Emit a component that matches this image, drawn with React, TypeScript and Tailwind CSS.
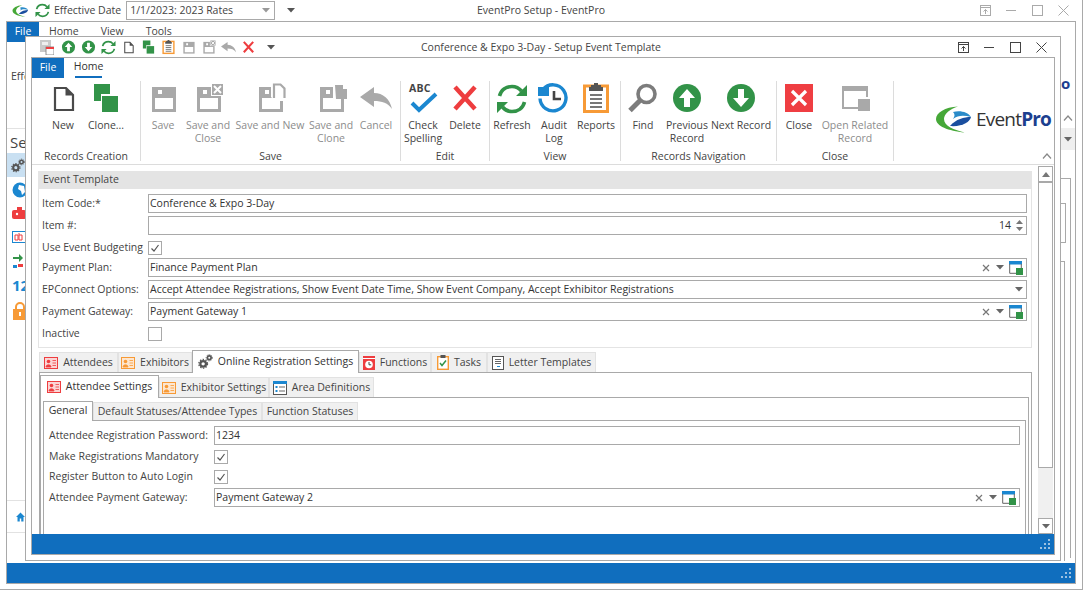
import React from "react";

function Doc({ s = 32, c = "#4a4a4a" }: { s?: number; c?: string }) {
  return (
    <svg width={s} height={s} viewBox="0 0 32 32" fill="none">
      <path d="M8 5h11l7 7v15H8z" stroke={c} strokeWidth="2.200" />
      <path d="M18.500 5v7.500h7.500z" fill={c} />
    </svg>
  );
}
function Clone({ s = 32 }: { s?: number }) {
  return (
    <svg width={s} height={s} viewBox="0 0 32 32">
      <path d="M4 1h16v10h-9v7H4z" fill="#329348" />
      <rect x="12" y="13" width="16" height="16" fill="#329348" />
    </svg>
  );
}
function Floppy({ s = 32, extra }: { s?: number; extra?: React.ReactNode }) {
  return (
    <svg width={s} height={s} viewBox="0 0 32 32">
      <path d="M5 4h24v25H5z" fill="#a9a9a9" />
      <path d="M11 7h4v4h-4zM8 15h18v11H8z" fill="#fff" />
      {extra}
    </svg>
  );
}
const SaveClose = ({ s = 32 }: { s?: number }) => (
  <Floppy s={s} extra={<g><rect x="19" y="0" width="13" height="13" fill="#fff" /><rect x="20" y="1" width="11" height="11" fill="#a9a9a9" /><path d="M22 3l7 7M29 3l-7 7" stroke="#fff" strokeWidth="2" /></g>} />
);
const SaveNew = ({ s = 32 }: { s?: number }) => (
  <Floppy s={s} extra={<g><path d="M17 14V0h10l5 4v14H21z" fill="#fff" /><path d="M20 15V1.500h6.500l4 4V15" fill="none" stroke="#a9a9a9" strokeWidth="2.200" /></g>} />
);
const SaveClone = ({ s = 32 }: { s?: number }) => (
  <Floppy s={s} extra={<g><rect x="18" y="2" width="14" height="14" fill="#fff" /><path d="M20 2h8v4h4v10h-11z" fill="#a9a9a9" /></g>} />
);
function Undo({ s = 32 }: { s?: number }) {
  return (
    <svg width={s} height={s} viewBox="0 0 32 32">
      <path d="M0 14L14 4v6c9 0 16 6 18 16-4-6-10-8-18-8v6z" fill="#a9a9a9" />
    </svg>
  );
}
function RedX({ s = 32 }: { s?: number }) {
  return (
    <svg width={s} height={s} viewBox="0 0 32 32">
      <path d="M6 4l20 22M26 4L6 26" stroke="#ee3d3f" strokeWidth="4.500" fill="none" />
    </svg>
  );
}
function Refresh({ s = 32 }: { s?: number }) {
  return (
    <svg width={s} height={s} viewBox="0 0 32 32" fill="none">
      <path d="M3.500 13C5 7 10 3.500 16 3.500c4 0 7 1.500 9.500 4.500" stroke="#329348" strokeWidth="3.600" />
      <path d="M28.500 19C27 25 22 28.500 16 28.500c-4 0-7-1.500-9.500-4.500" stroke="#329348" strokeWidth="3.600" />
      <path d="M31 2v11H20zM1 30V19h11z" fill="#329348" />
    </svg>
  );
}
function Audit({ s = 32 }: { s?: number }) {
  return (
    <svg width={s} height={s} viewBox="0 0 32 32" fill="none">
      <path d="M5 6.500a13 13 0 1 1-3 9" stroke="#1b87d0" strokeWidth="3.400" />
      <path d="M0 4h11v9H0z" fill="#1b87d0" />
      <path d="M16 8v8h7" stroke="#444" strokeWidth="2.600" />
    </svg>
  );
}
function Clip({ s = 32 }: { s?: number }) {
  return (
    <svg width={s} height={s} viewBox="0 0 32 32">
      <rect x="4.500" y="3" width="23" height="25.500" fill="#fff" stroke="#f79a36" strokeWidth="3" />
      <path d="M11 4V2h3V0h4v2h3v2h2v4H9V4z" fill="#555" />
      <path d="M10 12h12M10 16h12M10 20h12M10 24h12" stroke="#777" strokeWidth="2" />
    </svg>
  );
}
function Find({ s = 32 }: { s?: number }) {
  return (
    <svg width={s} height={s} viewBox="0 0 32 32" fill="none">
      <circle cx="19.500" cy="11" r="8.500" stroke="#7c7c7c" strokeWidth="3.600" />
      <path d="M13 17.500L3 27.500" stroke="#7c7c7c" strokeWidth="5" />
    </svg>
  );
}
function Circ({ s = 32, up }: { s?: number; up?: boolean }) {
  return (
    <svg width={s} height={s} viewBox="0 0 32 32">
      <circle cx="16" cy="15" r="14" fill="#329348" />
      <path
        d={up ? "M16 6l8 9h-5v9h-6v-9H8z" : "M16 24l8-9h-5V6h-6v9H8z"}
        fill="#fff"
      />
    </svg>
  );
}
function CloseBtn() {
  return (
    <svg width="32" height="32" viewBox="0 0 32 32">
      <rect x="2" y="1" width="28" height="28" fill="#ef3e42" />
      <path d="M9 8l14 14M23 8L9 22" stroke="#fff" strokeWidth="3.200" />
    </svg>
  );
}
function Related() {
  return (
    <svg width="32" height="32" viewBox="0 0 32 32" fill="none">
      <path d="M3 3h26v5H3z" fill="#a9a9a9" />
      <path d="M4 6v19h15M28 6v8" stroke="#a9a9a9" strokeWidth="2" />
      <rect x="19" y="16" width="12" height="12" fill="#a9a9a9" />
    </svg>
  );
}
function Abc() {
  return (
    <div className="relative w-[32px] h-[32px]">
      <span className="absolute left-[2px] top-[-2px] text-[10.500px] font-bold text-[#444] tracking-[0.2px]">ABC</span>
      <svg className="absolute left-0 top-0" width="32" height="32" viewBox="0 0 32 32" fill="none">
        <path d="M5 20l7 7L29 11" stroke="#1b87d0" strokeWidth="4" />
      </svg>
    </div>
  );
}
function Card({ c, t }: { c: string; t: string }) {
  return (
    <svg width="14" height="12" viewBox="0 0 14 12">
      <rect x="0.500" y="0.500" width="13" height="11" fill={t} stroke={c} />
      <circle cx="4.500" cy="4.500" r="1.800" fill={c} />
      <path d="M2 10c0-3 5-3 5 0zM8.500 3.500H12M8.500 6H12M8.500 8.500H12" fill={c} stroke={c} strokeWidth="0.800" />
    </svg>
  );
}
function Gears({ s = 16, c = "#555" }: { s?: number; c?: string }) {
  return (
    <svg width={s} height={s} viewBox="0 0 16 16" fill="none">
      <circle cx="5.500" cy="10.500" r="3" stroke={c} strokeWidth="2.400" />
      <circle cx="5.500" cy="10.500" r="4.700" stroke={c} strokeWidth="1.300" strokeDasharray="1.500 1.500" />
      <circle cx="12" cy="4" r="2" stroke={c} strokeWidth="1.800" />
      <circle cx="12" cy="4" r="3.300" stroke={c} strokeWidth="1" strokeDasharray="1.200 1.200" />
    </svg>
  );
}
function Clock() {
  return (
    <svg width="12" height="14" viewBox="0 0 12 14">
      <rect width="12" height="14" fill="#ee3d3f" />
      <rect x="0" y="2" width="12" height="1" fill="#fff" />
      <circle cx="6" cy="8.500" r="3.800" fill="#fff" />
      <path d="M6 6v2.800h2.200" stroke="#444" fill="none" />
    </svg>
  );
}
function TaskIco() {
  return (
    <svg width="12" height="15" viewBox="0 0 12 15">
      <rect x="0.700" y="1.700" width="10.600" height="12.600" fill="#fff" stroke="#f79a36" strokeWidth="1.400" />
      <rect x="3.500" y="0" width="5" height="3" fill="#555" />
      <path d="M3 8l2 2.500 4-5" stroke="#329348" strokeWidth="1.500" fill="none" />
    </svg>
  );
}
function Letter() {
  return (
    <svg width="12" height="14" viewBox="0 0 12 14">
      <rect x="0.500" y="0.500" width="11" height="13" fill="#fff" stroke="#555" />
      <path d="M3 3.500h6M3 5.500h6M3 7.500h6" stroke="#666" />
      <path d="M5 10.500h3" stroke="#1b87d0" />
    </svg>
  );
}
function AreaIco() {
  return (
    <svg width="14" height="14" viewBox="0 0 14 14">
      <rect x="0.500" y="0.500" width="13" height="13" fill="#fff" stroke="#555" />
      <rect width="14" height="3" fill="#1b87d0" />
      <rect x="2.500" y="5" width="2" height="2" fill="#1b87d0" />
      <rect x="2.500" y="9" width="2" height="2" fill="#1b87d0" />
      <path d="M6 6h6M6 10h6" stroke="#666" />
    </svg>
  );
}
function Swoosh({ w = 36, h = 27 }: { w?: number; h?: number }) {
  return (
    <svg width={w} height={h} viewBox="0 0 36 27">
      <path d="M22 0.500C9 1 0 7 0 13c0 7 12 12 29 13.500C18 24 8 20 8 13c0-5 6-10 14-12.500z" fill="#46a838" />
      <path d="M14 20c6-7 14-9 21-9-1 5-9 10-21 9z" fill="#1a4f9f" />
      <path d="M17 6c7-2 15 0 18 5-7-2-13-2-18 2 2-3 2-5 0-7z" fill="#2a8bc9" />
    </svg>
  );
}
function Logo() {
  return (
    <div className="flex items-center gap-[4px]">
      <Swoosh />
      <span className="text-[19px] leading-none tracking-[-0.800px] text-[#333]">
        Event<span className="font-bold text-[#1d3f8f]">Pro</span>
      </span>
    </div>
  );
}
function Caret({ c = "#666" }: { c?: string }) {
  return (
    <svg width="8" height="5" viewBox="0 0 8 5">
      <path d="M0 0h8L4 4.500z" fill={c} />
    </svg>
  );
}
function Chevron({ c = "#888" }: { c?: string }) {
  return (
    <svg width="10" height="6" viewBox="0 0 10 6" fill="none">
      <path d="M1 5.500L5 1l4 4.500" stroke={c} strokeWidth="1.200" />
    </svg>
  );
}
function WinCtl({ c }: { c: string }) {
  return (
    <div className="flex items-center gap-[11px]">
      <svg width="15" height="13" viewBox="0 0 15 13" fill="none">
        <rect x="0.500" y="0.500" width="10" height="10" transform="translate(2 1)" stroke={c} />
        <path d="M2.500 3.500h10M7.500 10V5.500M5.500 7.500l2-2 2 2" stroke={c} />
      </svg>
      <svg width="15" height="13" viewBox="0 0 15 13"><path d="M2 6.500h10" stroke={c} /></svg>
      <svg width="15" height="13" viewBox="0 0 15 13" fill="none"><rect x="2.500" y="1.500" width="10" height="10" stroke={c} /></svg>
      <svg width="15" height="13" viewBox="0 0 15 13" fill="none"><path d="M2.500 1.500l10 10M12.500 1.500l-10 10" stroke={c} /></svg>
    </div>
  );
}
function Grip() {
  return (
    <svg width="11" height="11" viewBox="0 0 11 11" fill="#9cc1e2">
      <rect x="8" y="0" width="2" height="2" /><rect x="4" y="4" width="2" height="2" /><rect x="8" y="4" width="2" height="2" />
      <rect x="0" y="8" width="2" height="2" /><rect x="4" y="8" width="2" height="2" /><rect x="8" y="8" width="2" height="2" />
    </svg>
  );
}

function RBtn({ w, icon, label, off }: { w: number; icon: React.ReactNode; label: React.ReactNode; off?: boolean }) {
  return (
    <div style={{ width: w }} className={`flex flex-col items-center shrink-0 ${off ? "text-[#8c8c8c]" : "text-[#444]"}`}>
      <div className="h-[32px] w-[32px] flex items-center justify-center">{icon}</div>
      <div className="mt-[4px] text-center leading-[13px] whitespace-nowrap">{label}</div>
    </div>
  );
}
function RGroup({ w, title, children }: { w: number; title: string; children: React.ReactNode }) {
  return (
    <div style={{ width: w }} className="shrink-0 h-[80px] flex flex-col border-r border-[#dcdcdc]">
      <div className="flex flex-1 pt-[2px]">{children}</div>
      <div className="text-center text-[#444] leading-[13px] h-[13px] mb-[-2px]">{title}</div>
    </div>
  );
}
function Input({ children, right, cls = "" }: { children?: React.ReactNode; right?: React.ReactNode; cls?: string }) {
  return (
    <div className={`h-[19px] border border-[#a9a9a9] bg-white flex items-center pl-[1px] pr-[3px] text-[#333] flex-1 min-w-0 ${cls}`}>
      <div className="flex-1 whitespace-nowrap">{children}</div>
      {right}
    </div>
  );
}
function Check({ on }: { on?: boolean }) {
  return (
    <div className="w-[14px] h-[14px] border border-[#a9a9a9] flex items-center justify-center bg-white">
      {on && (
        <svg width="10" height="10" viewBox="0 0 10 10" fill="none"><path d="M1.500 5.500l2.500 2.500 4.500-6" stroke="#555" strokeWidth="1.200" /></svg>
      )}
    </div>
  );
}
function ComboEnd() {
  return (
    <div className="flex items-center">
      <svg width="8" height="8" viewBox="0 0 8 8" fill="none"><path d="M1 1l6 6M7 1L1 7" stroke="#777" strokeWidth="1.200" /></svg>
      <div className="ml-[6px] mr-[5px]"><Caret /></div>
      <svg width="14" height="14" viewBox="0 0 14 14" fill="none">
        <rect x="0" y="0" width="13" height="3.500" fill="#1b87d0" />
        <path d="M0.700 3v9.300H8M12.300 3v4" stroke="#666" />
        <rect x="7" y="7" width="7" height="7" fill="#329348" />
      </svg>
    </div>
  );
}
function Tab({ w, active, h, icon, children }: { w: number; active?: boolean; h: number; icon?: React.ReactNode; children: React.ReactNode }) {
  return (
    <div
      style={{ width: w, height: h }}
      className={
        active
          ? "shrink-0 flex items-center justify-center gap-[5px] border border-b-0 border-[#a9a9a9] bg-white mb-[-1px] relative text-[#333] pb-[1px]"
          : "shrink-0 flex items-center justify-center gap-[5px] bg-[#f0f0f0] border border-b-0 border-[#e2e2e2] text-[#444]"
      }
    >
      {icon}
      <span className="whitespace-nowrap">{children}</span>
    </div>
  );
}

function BgLeft() {
  return (
    <div className="w-[18px] shrink-0 flex flex-col overflow-hidden">
      <div className="h-[87px] border-b border-[#e2e2e2] pt-[27px] pl-[4px] text-[#444] whitespace-nowrap">Effe</div>
      <div className="h-[24px] pt-[5px] pl-[3px] text-[15px] text-[#444] leading-[16px]">Se</div>
      <div className="h-[24px] bg-[#c9e0f2] flex items-center pl-[4px]"><Gears s={15} /></div>
      <div className="flex flex-col items-start pl-[5px] pt-[5px] gap-[8px]">
        <svg width="16" height="16" viewBox="0 0 16 16"><circle cx="8" cy="8" r="7.500" fill="#1b87d0" /><path d="M7 3l5 1 1 6-3 3-1-4-3-2z" fill="#fff" /></svg>
        <svg width="16" height="16" viewBox="0 0 16 16"><rect x="0" y="4" width="14" height="9" rx="2" fill="#ee3d3f" /><rect x="5" y="1" width="5" height="4" fill="#ee3d3f" /><circle cx="5" cy="8" r="1.200" fill="#fff" /></svg>
        <svg width="16" height="15" viewBox="0 0 16 15"><rect x="0.500" y="1.500" width="15" height="11" fill="#fff" stroke="#1b87d0" /><path d="M3 5h3v5H3zM7 3v7h3V5H7" stroke="#ee3d3f" fill="none" /></svg>
        <svg width="16" height="16" viewBox="0 0 16 16"><path d="M1 4h6V1l4 4-4 4V6H1z" fill="#329348" /><rect x="6" y="11" width="5" height="3" fill="#ee3d3f" /><rect x="1" y="12" width="4" height="3" fill="#1b87d0" /></svg>
        <span className="font-bold text-[15px] leading-[17px] text-[#1b87d0] whitespace-nowrap">12</span>
        <svg width="16" height="19" viewBox="0 0 16 19"><rect x="1" y="7" width="14" height="11" fill="#f79a36" /><path d="M4 8V5a4 4 0 0 1 8 0v3" stroke="#f79a36" strokeWidth="2" fill="none" /><rect x="7" y="10" width="2" height="4" fill="#fff" /></svg>
      </div>
      <div className="flex-1" />
      <div className="border-t border-b border-[#e2e2e2] h-[33px] flex items-center pl-[9px]">
        <svg width="12" height="12" viewBox="0 0 12 12"><path d="M6 0l6 6h-2v6H7V8H5v4H2V6H0z" fill="#1b87d0" /></svg>
      </div>
      <div className="h-[30px]" />
    </div>
  );
}
function BgRight() {
  return (
    <div className="w-[15px] shrink-0 flex flex-col overflow-hidden">
      <div className="h-[86px] pl-[1px]">
        <div className="pt-[33px] h-[63px] text-[15px] leading-[16px] font-bold text-[#1d3f8f]">o</div>
        <div className="pl-[2px] pt-[10px]"><Chevron /></div>
      </div>
      <div className="h-[22px] bg-[#efefef] flex items-center justify-center"><Caret /></div>
      <div className="h-[28px]" />
      <div className="h-[380px] w-[11px] border-t border-r border-[#a9a9a9] pt-[24px]">
        <div className="h-[40px] w-[6px] border-t border-r border-b border-[#a9a9a9]" />
        <div className="h-[300px] w-[5px] mt-[18px] border-t border-r border-[#a9a9a9]" />
      </div>
    </div>
  );
}

export default function App() {
  return (
    <div className="relative w-[1083px] h-[590px] bg-white overflow-hidden border-r border-b border-[#a9a9a9] text-[10.500px] [font-family:'Open_Sans','Noto_Sans',sans-serif]">
      {/* main window */}
      <div className="flex items-center h-[21px]">
        <div className="w-[300px] flex items-center shrink-0 h-full">
          <div className="ml-[12px] w-[17px]"><Swoosh w={17} h={12} /></div>
          <div className="ml-[6px]"><Refresh s={15} /></div>
          <span className="ml-[4px] text-[#444] whitespace-nowrap pt-[1px]">Effective Date</span>
          <div className="ml-[5px] w-[149px] h-[19px] border border-[#a9a9a9] flex items-center justify-between pl-[3px] pr-[4px] text-[#444]">
            <span className="whitespace-nowrap">1/1/2023: 2023 Rates</span>
            <Caret c="#999" />
          </div>
          <div className="ml-[12px]"><Caret c="#555" /></div>
        </div>
        <div className="flex-1 text-center text-[#444] whitespace-nowrap pt-[1px]">EventPro Setup - EventPro</div>
        <div className="w-[300px] flex justify-end pr-[11px]"><WinCtl c="#aaa" /></div>
      </div>
      <div className="ml-[6px] w-[1070px] h-[563px] border border-[#a9a9a9] flex flex-col">
        <div className="h-[20px] flex shrink-0">
          <div className="w-[32px] h-[20px] bg-[#106ebe] text-white flex items-center justify-center">File</div>
          <div className="flex items-center text-[#444] pl-[10px] gap-[22px]"><span>Home</span><span>View</span><span>Tools</span></div>
        </div>
        <div className="flex-1 flex justify-between min-h-0 overflow-hidden">
          <BgLeft />
          <BgRight />
        </div>
        <div className="h-[20px] bg-[#106ebe] shrink-0 flex items-center justify-end pr-[3px]"><Grip /></div>
      </div>

      {/* inner window */}
      <div className="absolute left-[25px] top-[36px] w-[1036px] h-[525px] bg-white border border-[#a9a9a9] flex flex-col">
        <div className="h-[20px] flex items-center shrink-0">
          <div className="w-[297px] flex items-center pl-[14px] shrink-0">
            <svg width="14" height="15" viewBox="0 0 14 15" className="shrink-0"><rect x="0" y="0" width="11" height="12" fill="#c9c9c9" /><rect x="2" y="2" width="6" height="3" fill="#eee" /><rect x="6" y="7" width="8" height="8" fill="#fff" stroke="#777" strokeWidth="0.800" /><rect x="6" y="7" width="8" height="2" fill="#ee3d3f" /></svg>
            <div className="ml-[7px] flex items-center gap-[5px]">
              <Circ s={15} up /><Circ s={15} /><Refresh s={15} />
              <Doc s={15} /><Clone s={15} /><Clip s={15} />
              <Floppy s={15} /><SaveClose s={15} /><Undo s={15} /><RedX s={15} />
            </div>
            <div className="ml-[11px]"><Caret c="#555" /></div>
          </div>
          <div className="flex-1 text-center text-[#444] whitespace-nowrap pt-[1px]">Conference &amp; Expo 3-Day - Setup Event Template</div>
          <div className="w-[301px] flex justify-end pr-[11px]"><WinCtl c="#444" /></div>
        </div>
        <div className="ml-[5px] w-[1024px] h-[498px] border border-[#a9a9a9] flex flex-col">
          {/* ribbon tabs */}
          <div className="h-[20px] flex shrink-0">
            <div className="w-[32px] h-[20px] bg-[#106ebe] text-white flex items-center justify-center">File</div>
            <div className="ml-[11px] h-[20px] w-[27px] border-b-2 border-[#106ebe] flex items-center justify-center text-[#333]">Home</div>
          </div>
          {/* ribbon */}
          <div className="h-[87px] pt-[3px] flex border-b border-[#dcdcdc] shrink-0 relative">
            <RGroup w={109} title="Records Creation">
              <div className="w-[9px]" />
              <RBtn w={44} icon={<Doc />} label="New" />
              <RBtn w={42} icon={<Clone />} label="Clone..." />
            </RGroup>
            <RGroup w={260} title="Save">
              <RBtn w={44} off icon={<Floppy />} label="Save" />
              <RBtn w={46} off icon={<SaveClose />} label={<>Save and<br />Close</>} />
              <RBtn w={78} off icon={<SaveNew />} label="Save and New" />
              <RBtn w={44} off icon={<SaveClone />} label={<>Save and<br />Clone</>} />
              <RBtn w={46} off icon={<Undo />} label="Cancel" />
            </RGroup>
            <RGroup w={89} title="Edit">
              <RBtn w={44} icon={<Abc />} label={<>Check<br />Spelling</>} />
              <RBtn w={40} icon={<RedX />} label="Delete" />
            </RGroup>
            <RGroup w={131} title="View">
              <RBtn w={44} icon={<Refresh />} label="Refresh" />
              <RBtn w={40} icon={<Audit />} label={<>Audit<br />Log</>} />
              <RBtn w={44} icon={<Clip />} label="Reports" />
            </RGroup>
            <RGroup w={156} title="Records Navigation">
              <RBtn w={44} icon={<Find />} label="Find" />
              <RBtn w={44} icon={<Circ up />} label={<>Previous<br />Record</>} />
              <RBtn w={64} icon={<Circ />} label="Next Record" />
            </RGroup>
            <RGroup w={117} title="Close">
              <RBtn w={44} icon={<CloseBtn />} label="Close" />
              <RBtn w={68} off icon={<Related />} label={<>Open Related<br />Record</>} />
            </RGroup>
            <div className="flex-1 relative">
              <div className="pl-[42px] pt-[25px]"><Logo /></div>
              <div className="absolute right-[2px] bottom-[5px]"><Chevron /></div>
            </div>
          </div>
          {/* form area */}
          <div className="flex-1 flex min-h-0">
            <div className="w-[1006px] shrink-0 pl-[6px] pt-[6px] overflow-hidden">
              <div className="w-[994px]">
                <div className="h-[18px] bg-[#e4e4e4] pl-[5px] flex items-center text-[#444]">Event Template</div>
                <div className="border-l border-r border-b border-[#e4e4e4] pl-[3px] pr-[4px] pt-[5px] pb-[4px] text-[#444]">
                  <div className="flex items-center mb-[3px]"><div className="w-[106px]">Item Code:*</div><Input>Conference &amp; Expo 3-Day</Input></div>
                  <div className="flex items-center mb-[3px]"><div className="w-[106px]">Item #:</div>
                    <Input right={
                      <div className="flex items-center gap-[5px]"><span>14</span>
                        <div className="flex flex-col gap-[3px]">
                          <svg width="7" height="4" viewBox="0 0 7 4"><path d="M0 4h7L3.500 0z" fill="#777" /></svg>
                          <svg width="7" height="4" viewBox="0 0 7 4"><path d="M0 0h7L3.500 4z" fill="#777" /></svg>
                        </div></div>} /></div>
                  <div className="flex items-center h-[20px]"><div className="w-[106px] whitespace-nowrap">Use Event Budgeting</div><Check on /></div>
                  <div className="flex items-center mb-[3px]"><div className="w-[106px]">Payment Plan:</div><Input right={<ComboEnd />}>Finance Payment Plan</Input></div>
                  <div className="flex items-center mb-[3px]"><div className="w-[106px]">EPConnect Options:</div><Input right={<Caret />}>Accept Attendee Registrations, Show Event Date Time, Show Event Company, Accept Exhibitor Registrations</Input></div>
                  <div className="flex items-center mb-[3px]"><div className="w-[106px]">Payment Gateway:</div><Input right={<ComboEnd />}>Payment Gateway 1</Input></div>
                  <div className="flex items-center h-[19px]"><div className="w-[106px]">Inactive</div><Check /></div>
                </div>
              </div>

              {/* level 1 tabs */}
              <div className="w-[993px] ml-[1px] mt-[2px] h-[190px] flex flex-col">
                <div className="flex items-end h-[23px] border-b border-[#a9a9a9] shrink-0">
                  <Tab w={79} h={20} icon={<Card c="#ee3d3f" t="#fbd5d5" />}>Attendees</Tab>
                  <Tab w={74} h={20} icon={<Card c="#f79a36" t="#fde6cf" />}>Exhibitors</Tab>
                  <Tab w={167} h={23} active icon={<Gears s={15} />}>Online Registration Settings</Tab>
                  <Tab w={72} h={20} icon={<Clock />}>Functions</Tab>
                  <Tab w={56} h={20} icon={<TaskIco />}>Tasks</Tab>
                  <Tab w={109} h={20} icon={<Letter />}>Letter Templates</Tab>
                </div>
                <div className="flex-1 border-l border-r border-[#a9a9a9] pt-[2px] pr-[2px] min-h-0 flex flex-col">
                  <div className="flex items-end h-[23px] border-b border-[#a9a9a9] shrink-0">
                    <Tab w={119} h={23} active icon={<Card c="#ee3d3f" t="#fbd5d5" />}>Attendee Settings</Tab>
                    <Tab w={110} h={20} icon={<Card c="#f79a36" t="#fde6cf" />}>Exhibitor Settings</Tab>
                    <Tab w={105} h={20} icon={<AreaIco />}>Area Definitions</Tab>
                  </div>
                  <div className="flex-1 border-l border-r border-[#a9a9a9] pt-[3px] pl-[2px] pr-[2px] min-h-0 flex flex-col">
                    <div className="flex items-end h-[20px] border-b border-[#a9a9a9] shrink-0">
                      <Tab w={50} h={20} active>General</Tab>
                      <Tab w={169} h={18}>Default Statuses/Attendee Types</Tab>
                      <Tab w={96} h={18}>Function Statuses</Tab>
                    </div>
                    <div className="flex-1 border-l border-r border-[#a9a9a9] pl-[5px] pr-[5px] pt-[5px] text-[#444] min-h-0">
                      <div className="flex items-center mb-[2px]"><div className="w-[165px] whitespace-nowrap">Attendee Registration Password:</div><Input>1234</Input></div>
                      <div className="flex items-center h-[20px]"><div className="w-[165px] whitespace-nowrap">Make Registrations Mandatory</div><Check on /></div>
                      <div className="flex items-center h-[20px] mb-[1px]"><div className="w-[165px] whitespace-nowrap">Register Button to Auto Login</div><Check on /></div>
                      <div className="flex items-center"><div className="w-[165px] whitespace-nowrap">Attendee Payment Gateway:</div><Input right={<ComboEnd />}>Payment Gateway 2</Input></div>
                    </div>
                  </div>
                </div>
              </div>
            </div>
            {/* scrollbar */}
            <div className="w-[15px] mt-[1px] flex flex-col shrink-0">
              <div className="h-[16px] border border-[#a9a9a9] flex items-center justify-center shrink-0">
                <svg width="8" height="5" viewBox="0 0 8 5"><path d="M0 5h8L4 0z" fill="#777" /></svg>
              </div>
              <div className="h-[286px] border border-[#a9a9a9] shrink-0" />
              <div className="flex-1 bg-[#f0f0f0]" />
              <div className="h-[16px] border border-[#a9a9a9] flex items-center justify-center shrink-0">
                <Caret />
              </div>
            </div>
          </div>
          {/* status */}
          <div className="h-[20px] bg-[#106ebe] shrink-0 flex items-center justify-end pr-[3px]"><Grip /></div>
        </div>
      </div>
    </div>
  );
}
